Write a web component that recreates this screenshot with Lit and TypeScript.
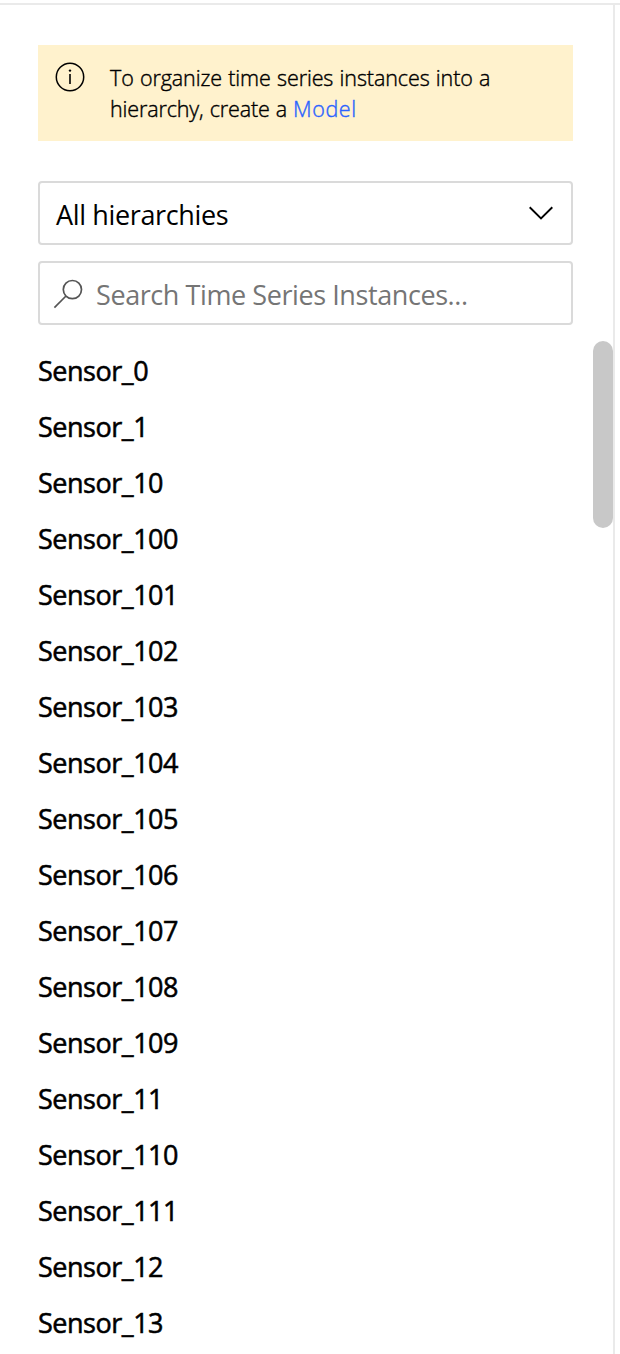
import { LitElement, html, css } from "lit";
import { customElement } from "lit/decorators.js";

const SENSORS = ["0", "1", "10", "100", "101", "102", "103", "104", "105", "106", "107", "108", "109", "11", "110", "111", "12", "13"];

@customElement("app-root")
export class AppRoot extends LitElement {
  static styles = css`
    :host {
      display: block;
      box-sizing: border-box;
      height: 1354px;
      padding-top: 3px;
      overflow: hidden;
      background: #fff;
      color: #000;
      font-family: "Open Sans", "Noto Sans", sans-serif;
    }
    .panel {
      box-sizing: border-box;
      width: 615px;
      height: 1349px;
      border-right: 2px solid #eaeaea;
      padding: 40px 0 0 38px;
      overflow: hidden;
    }
    .rule { height: 2px; background: #eaeaea; }
    .banner {
      box-sizing: border-box;
      width: 535px;
      height: 96px;
      padding: 17px 0 0 17px;
      display: flex;
      gap: 25px;
      background: #fff2cd;
    }
    .banner svg { flex: none; width: 30px; height: 30px; }
    .message {
      font-size: 21.5px;
      line-height: 31px;
      font-weight: 300;
      -webkit-text-stroke: 0.4px currentColor;
      white-space: nowrap;
    }
    .line { display: block; width: max-content; }
    .l1 { letter-spacing: -0.1px; word-spacing: 0.8px; }
    .l2 { letter-spacing: -0.13px; word-spacing: 0.6px; }
    .link { color: #2b63ff; letter-spacing: 0.6px; -webkit-text-stroke: 0.4px #2b63ff; }
    .field {
      box-sizing: border-box;
      width: 535px;
      height: 64px;
      border: 2px solid #dadada;
      border-radius: 4px;
      display: flex;
      align-items: center;
      font-size: 27px;
      line-height: 38px;
      white-space: nowrap;
    }
    .select { margin-top: 40px; padding: 4px 17px 0 16px; justify-content: space-between; }
    .select svg { width: 26px; height: 16px; margin-top: -5px; }
    .all { letter-spacing: -0.36px; }
    .search { margin-top: 16px; padding: 4px 0 0 13px; gap: 12px; color: #757575; }
    .search svg { width: 31px; height: 31px; margin-top: -4px; }
    .placeholder { letter-spacing: -0.42px; }
    .body { display: flex; justify-content: space-between; margin-top: 16px; }
    .list { padding-top: 2px; }
    .row {
      height: 56px;
      line-height: 56px;
      font-size: 27px;
      letter-spacing: -0.48px;
      -webkit-text-stroke: 0.55px #000;
      white-space: nowrap;
    }
    .thumb { width: 20px; height: 187px; border-radius: 10px; background: #c8c8c8; }
  `;

  render() {
    return html`
      <div class="rule"></div>
      <div class="panel">
        <div class="banner">
          <svg viewBox="0 0 30 30" fill="none" stroke="#000">
            <circle cx="15" cy="15" r="13.7" stroke-width="1.5" />
            <path d="M15 12V22" stroke-width="1.6" />
            <circle cx="15" cy="8.6" r="1.2" fill="#000" stroke="none" />
          </svg>
          <div class="message">
            <span class="line l1">To organize time series instances into a</span>
            <span class="line l2">hierarchy, create a <span class="link">Model</span></span>
          </div>
        </div>
        <div class="field select">
          <span class="all">All hierarchies</span>
          <svg viewBox="0 0 26 16" fill="none" stroke="#000" stroke-width="1.9"><path d="M1.7 2.3 13 13.4 24.3 2.3" /></svg>
        </div>
        <div class="field search">
          <svg viewBox="0 0 31 31" fill="none" stroke="#555" stroke-width="1.7">
            <circle cx="19.4" cy="11.6" r="9.1" />
            <path d="M13 18 1.4 29.6" />
          </svg>
          <span class="placeholder">Search Time Series Instances...</span>
        </div>
        <div class="body">
          <div class="list">${SENSORS.map((id) => html`<div class="row">Sensor_${id}</div>`)}</div>
          <div class="thumb"></div>
        </div>
      </div>
    `;
  }
}
